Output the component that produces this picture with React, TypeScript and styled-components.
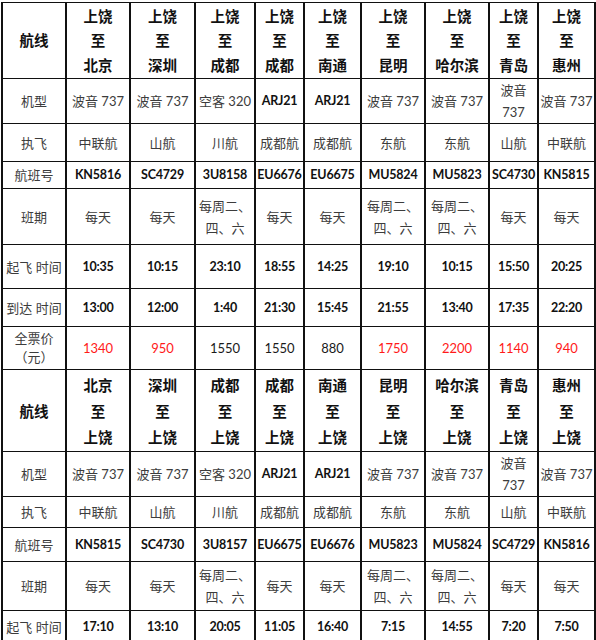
import React from "react";
import styled, { createGlobalStyle, css } from "styled-components";

const GlobalStyle = createGlobalStyle`
  html, body {
    margin: 0;
    padding: 0;
    background: #ffffff;
  }
`;

type Kind = "head" | "text" | "code" | "price";

interface RowDef {
  label: string[];
  kind: Kind;
  h: number;
  lh?: number;
  cells: string[][];
  red?: boolean[];
}

const Sheet = styled.table`
  border-collapse: collapse;
  table-layout: fixed;
  width: 594px;
  margin: 2px 0 0 1px;
`;

const Col = styled.col<{ $w: number }>`
  width: ${(p) => p.$w}px;
`;

const Row = styled.tr<{ $h: number }>`
  height: ${(p) => p.$h}px;
`;

const Cell = styled.td<{ $kind: Kind; $red?: boolean; $lh?: number; $label?: boolean }>`
  border-top: 1px solid #111;
  border-bottom: 1px solid #111;
  border-left: 2px solid #111;
  border-right: 2px solid #111;
  padding: 0 1px;
  text-align: center;
  vertical-align: middle;
  white-space: nowrap;
  overflow: visible;
  font-family: "Lato", "Noto Sans CJK SC", sans-serif;
  font-size: 13px;
  line-height: ${(p) => p.$lh ?? 20}px;
  color: #3c3c3c;

  ${(p) =>
    p.$kind === "head" &&
    css`
      font-family: "Noto Sans CJK SC", sans-serif;
      font-weight: 700;
      font-size: 14.5px;
      color: #111;
    `}

  ${(p) =>
    p.$kind === "code" &&
    !p.$label &&
    css`
      font-weight: 700;
      font-size: 12.5px;
      letter-spacing: -0.2px;
      color: #111;
    `}

  ${(p) =>
    p.$kind === "price" &&
    !p.$label &&
    css`
      font-size: 13px;
      color: ${p.$red ? "#ff1a1a" : "#1a1a1a"};
    `}
`;

const widths = [64, 64, 65, 60, 49, 57, 64, 64, 49, 57];

const outbound = ["北京", "深圳", "成都", "成都", "南通", "昆明", "哈尔滨", "青岛", "惠州"];
const planes: string[][] = [
  ["波音 737"],
  ["波音 737"],
  ["空客 320"],
  ["ARJ21"],
  ["ARJ21"],
  ["波音 737"],
  ["波音 737"],
  ["波音", "737"],
  ["波音 737"],
];
const carriers = ["中联航", "山航", "川航", "成都航", "成都航", "东航", "东航", "山航", "中联航"];
const weekly = ["每周二、", "四、六"];
const schedule: string[][] = [
  ["每天"],
  ["每天"],
  weekly,
  ["每天"],
  ["每天"],
  weekly,
  weekly,
  ["每天"],
  ["每天"],
];

const one = (list: string[]) => list.map((s) => [s]);

const rows: RowDef[] = [
  {
    label: ["航线"],
    kind: "head",
    h: 76,
    lh: 24.5,
    cells: outbound.map((c) => ["上饶", "至", c]),
  },
  { label: ["机型"], kind: "text", h: 44, lh: 22, cells: planes },
  { label: ["执飞"], kind: "text", h: 38, cells: one(carriers) },
  {
    label: ["航班号"],
    kind: "code",
    h: 27,
    cells: one(["KN5816", "SC4729", "3U8158", "EU6676", "EU6675", "MU5824", "MU5823", "SC4730", "KN5815"]),
  },
  { label: ["班期"], kind: "text", h: 56, lh: 22, cells: schedule },
  {
    label: ["起飞 时间"],
    kind: "code",
    h: 44,
    cells: one(["10:35", "10:15", "23:10", "18:55", "14:25", "19:10", "10:15", "15:50", "20:25"]),
  },
  {
    label: ["到达 时间"],
    kind: "code",
    h: 38,
    cells: one(["13:00", "12:00", "1:40", "21:30", "15:45", "21:55", "13:40", "17:35", "22:20"]),
  },
  {
    label: ["全票价", "（元）"],
    kind: "price",
    h: 43,
    lh: 19,
    cells: one(["1340", "950", "1550", "1550", "880", "1750", "2200", "1140", "940"]),
    red: [true, true, false, false, false, true, true, true, true],
  },
  {
    label: ["航线"],
    kind: "head",
    h: 82,
    lh: 26,
    cells: outbound.map((c) => [c, "至", "上饶"]),
  },
  { label: ["机型"], kind: "text", h: 43, lh: 22, cells: planes },
  { label: ["执飞"], kind: "text", h: 31, cells: one(carriers) },
  {
    label: ["航班号"],
    kind: "code",
    h: 34,
    cells: one(["KN5815", "SC4730", "3U8157", "EU6675", "EU6676", "MU5823", "MU5824", "SC4729", "KN5816"]),
  },
  { label: ["班期"], kind: "text", h: 49, lh: 22, cells: schedule },
  {
    label: ["起飞 时间"],
    kind: "code",
    h: 33,
    cells: one(["17:10", "13:10", "20:05", "11:05", "16:40", "7:15", "14:55", "7:20", "7:50"]),
  },
];

// ARJ21 is set like the flight codes, not like the Chinese plane names
const kindOf = (row: RowDef, value: string[]): Kind =>
  row.kind === "text" && /^[A-Z0-9]+$/.test(value[0]) ? "code" : row.kind;

function Lines({ parts }: { parts: string[] }) {
  return (
    <>
      {parts.map((p, i) => (
        <React.Fragment key={i}>
          {i > 0 && <br />}
          {p}
        </React.Fragment>
      ))}
    </>
  );
}

export default function App() {
  return (
    <>
      <GlobalStyle />
      <Sheet>
        <colgroup>
          {widths.map((w, i) => (
            <Col key={i} $w={w} />
          ))}
        </colgroup>
        <tbody>
          {rows.map((row, r) => (
            <Row key={r} $h={row.h}>
              <Cell $kind={row.kind} $label $lh={row.lh}>
                <Lines parts={row.label} />
              </Cell>
              {row.cells.map((value, c) => (
                <Cell key={c} $kind={kindOf(row, value)} $red={row.red?.[c]} $lh={row.lh}>
                  <Lines parts={value} />
                </Cell>
              ))}
            </Row>
          ))}
        </tbody>
      </Sheet>
    </>
  );
}
